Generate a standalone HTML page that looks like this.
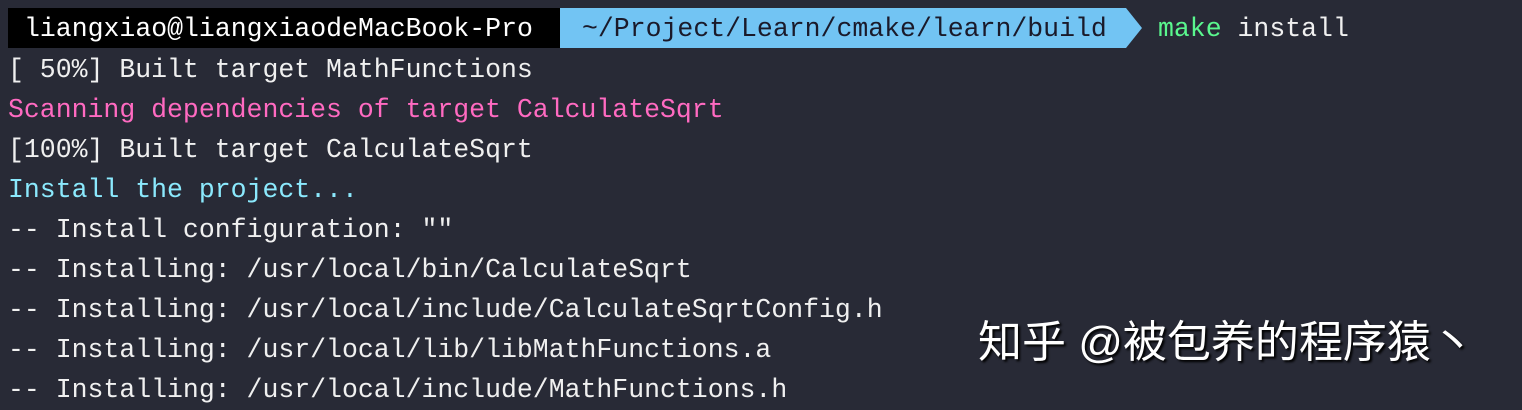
<!DOCTYPE html>
<html><head><meta charset="utf-8"><style>
body{margin:0;width:1522px;height:402px;background:#282a36;overflow:hidden;position:relative;font-family:"Liberation Mono",monospace;font-size:26.5px;color:#f0f0f0}
.l{position:absolute;left:8px;height:40px;line-height:40px;white-space:pre;margin-top:1px}
.seg1{position:absolute;left:8px;top:8px;width:552px;height:40px;background:#000}
.seg2{position:absolute;left:560px;top:8px;width:566px;height:40px;background:#72c4f3}
.arr{position:absolute;top:8px;width:0;height:0;border-top:20px solid transparent;border-bottom:20px solid transparent}
.wm{position:absolute;left:978px;top:306px;font-family:"Liberation Sans","Noto Sans CJK SC",sans-serif;font-size:44px;color:#fff;text-shadow:2px 2px 2px #000;white-space:pre}
</style></head><body>
<div class="seg1"></div><div class="arr" style="left:560px;border-left:16px solid #000"></div>
<div class="seg2"></div><div class="arr" style="left:1126px;border-left:16px solid #72c4f3"></div>
<div class="l" style="top:8px;left:24px;color:#fff">liangxiao@liangxiaodeMacBook-Pro</div>
<div class="l" style="top:8px;left:582px;color:#1a1a2a">~/Project/Learn/cmake/learn/build</div>
<div class="l" style="top:8px;left:1158px"><span style="color:#5af78e">make</span> install</div>
<div class="l" style="top:49px">[ 50%] Built target MathFunctions</div>
<div class="l" style="top:89px;color:#ff6ac1">Scanning dependencies of target CalculateSqrt</div>
<div class="l" style="top:129px">[100%] Built target CalculateSqrt</div>
<div class="l" style="top:169px;color:#8be9fd">Install the project...</div>
<div class="l" style="top:209px">-- Install configuration: ""</div>
<div class="l" style="top:249px">-- Installing: /usr/local/bin/CalculateSqrt</div>
<div class="l" style="top:289px">-- Installing: /usr/local/include/CalculateSqrtConfig.h</div>
<div class="l" style="top:329px">-- Installing: /usr/local/lib/libMathFunctions.a</div>
<div class="l" style="top:369px">-- Installing: /usr/local/include/MathFunctions.h</div>
<div class="wm">知乎 @被包养的程序猿丶</div>
</body></html>
